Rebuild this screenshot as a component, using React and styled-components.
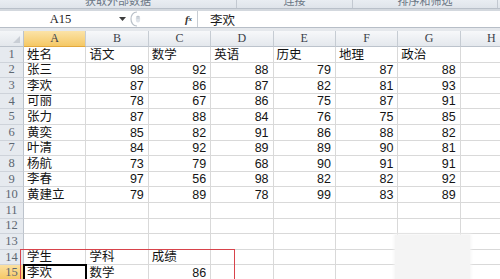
import React from 'react';
import styled, { createGlobalStyle } from 'styled-components';

const GlobalStyle = createGlobalStyle`
  html, body {
    margin: 0;
    padding: 0;
    background: #ffffff;
  }
  * {
    box-sizing: border-box;
  }
`;

const Window = styled.div`
  position: relative;
  width: 500px;
  height: 279px;
  overflow: hidden;
  background: #ffffff;
  font-family: 'Liberation Sans', 'Noto Sans CJK SC', sans-serif;
`;

const Ribbon = styled.div`
  display: flex;
  height: 9px;
  overflow: hidden;
  background: linear-gradient(#e9edf2, #dfe4ea);
  border-bottom: 1px solid #b9c0c9;
`;

const RibbonGroup = styled.div`
  width: ${(props) => props.$width}px;
  flex-shrink: 0;
  display: flex;
  justify-content: center;
  border-right: 1px solid #c3c9d1;
`;

const RibbonLabel = styled.span`
  font-family: 'Noto Sans CJK SC', sans-serif;
  font-size: 11px;
  line-height: 14px;
  margin-top: -7px;
  color: #6a7684;
`;

const RibbonEdge = styled.div`
  height: 2px;
  background: #d3d8de;
`;

const FormulaBar = styled.div`
  display: flex;
  align-items: center;
  height: 17px;
  background: #ffffff;
  border-bottom: 1px solid #b7bec7;
`;

const NameBox = styled.div`
  width: 128px;
  display: flex;
  align-items: center;
  padding-right: 2px;
`;

const NameText = styled.span`
  flex: 1;
  text-align: center;
  padding-left: 2px;
  font-family: 'Liberation Serif', serif;
  font-size: 12.5px;
  color: #222;
`;

const Splitter = styled.div`
  width: 52px;
  display: flex;
  align-items: center;
  padding-left: 2px;
`;

const FxBox = styled.div`
  width: 18px;
  height: 100%;
  display: flex;
  align-items: center;
  justify-content: center;
  border-right: 1px solid #c8cdd3;
  font-family: 'Liberation Serif', serif;
  font-style: italic;
  font-weight: bold;
  font-size: 11px;
  color: #333;
  sub {
    font-size: 7px;
    vertical-align: -1px;
  }
`;

const Formula = styled.div`
  padding-left: 12px;
  font-family: 'Noto Sans CJK SC', sans-serif;
  font-size: 12.5px;
  color: #1a1a1a;
`;

const Gap = styled.div`
  height: 3px;
  background: #e5e8ec;
`;

const Sheet = styled.div`
  display: grid;
  grid-template-columns: 24px repeat(8, 62.4px);
  grid-template-rows: 16px repeat(15, 15.6px);
`;

const Corner = styled.div`
  display: flex;
  align-items: flex-end;
  justify-content: flex-end;
  padding: 0 3px 3px 0;
  background: linear-gradient(#f4f6f8, #e3e7ec);
  border-right: 1px solid #bcc3cc;
  border-bottom: 1px solid #bcc3cc;
`;

const CornerMark = styled.div`
  width: 0;
  height: 0;
  border-left: 7px solid transparent;
  border-bottom: 7px solid #c9ced5;
`;

const ColHead = styled.div`
  display: flex;
  align-items: center;
  justify-content: center;
  font-family: 'Liberation Serif', serif;
  font-size: 12px;
  color: #3b4149;
  background: ${(props) =>
    props.$active
      ? 'linear-gradient(#fbe3a8, #f5c865)'
      : 'linear-gradient(#f7f8fa, #e4e8ed)'};
  border-right: 1px solid #c6ccd3;
  border-bottom: 1px solid ${(props) => (props.$active ? '#e2a83d' : '#bcc3cc')};
`;

const RowHead = styled.div`
  display: flex;
  align-items: center;
  justify-content: center;
  font-family: 'Liberation Serif', serif;
  font-size: 12.5px;
  color: #5d6772;
  background: ${(props) =>
    props.$active ? 'linear-gradient(#fbe0a0, #f5c661)' : '#e6eaef'};
  border-right: 1px solid #bcc3cc;
  border-bottom: 1px solid #ced3da;
`;

const Cell = styled.div`
  display: flex;
  align-items: flex-end;
  justify-content: ${(props) => (props.$num ? 'flex-end' : 'flex-start')};
  padding: 0 ${(props) => (props.$num ? '4px' : '2px')} 0 3px;
  line-height: 13px;
  font-size: 12.5px;
  color: #141414;
  white-space: nowrap;
  border-right: 1px solid #d9d9d9;
  border-bottom: 1px solid #d9d9d9;
  outline: ${(props) => (props.$selected ? '2px solid #000' : 'none')};
  outline-offset: -1px;
  position: ${(props) => (props.$selected ? 'relative' : 'static')};
  z-index: ${(props) => (props.$selected ? 2 : 'auto')};
`;

const Highlight = styled.div`
  position: absolute;
  left: 20px;
  top: 249px;
  width: 215px;
  height: 60px;
  border: 1px solid #d8434b;
  pointer-events: none;
`;

const Smudge = styled.div`
  position: absolute;
  left: 395px;
  top: 235px;
  width: 75px;
  height: 50px;
  background: #f4f4f4;
  box-shadow: 0 0 3px 1px #f4f4f4;
`;

const columns = ['A', 'B', 'C', 'D', 'E', 'F', 'G', 'H'];

const rows = [
  ['姓名', '语文', '数学', '英语', '历史', '地理', '政治'],
  ['张三', 98, 92, 88, 79, 87, 88],
  ['李欢', 87, 86, 87, 82, 81, 93],
  ['可丽', 78, 67, 86, 75, 87, 91],
  ['张力', 87, 88, 84, 76, 75, 85],
  ['黄奕', 85, 82, 91, 86, 88, 82],
  ['叶清', 84, 92, 89, 89, 90, 81],
  ['杨航', 73, 79, 68, 90, 91, 91],
  ['李春', 97, 56, 98, 82, 82, 92],
  ['黄建立', 79, 89, 78, 99, 83, 89],
  [],
  [],
  [],
  ['学生', '学科', '成绩'],
  ['李欢', '数学', 86],
];

const activeRow = 15;

export default function App() {
  return (
    <Window>
      <GlobalStyle />
      <Ribbon>
        <RibbonGroup $width={237}>
          <RibbonLabel>获取外部数据</RibbonLabel>
        </RibbonGroup>
        <RibbonGroup $width={116}>
          <RibbonLabel>连接</RibbonLabel>
        </RibbonGroup>
        <RibbonGroup $width={145}>
          <RibbonLabel>排序和筛选</RibbonLabel>
        </RibbonGroup>
      </Ribbon>
      <RibbonEdge />
      <FormulaBar>
        <NameBox>
          <NameText>A15</NameText>
          <svg width='7' height='4' viewBox='0 0 7 4'>
            <path d='M0 0 H7 L3.5 4 Z' fill='#3c3c3c' />
          </svg>
        </NameBox>
        <Splitter>
          <svg width='14' height='16' viewBox='0 0 14 16'>
            <path
              d='M7 1 C3 1 1 4.5 1 8 C1 11.5 3 15 7 15'
              fill='none'
              stroke='#b9c0c8'
              strokeWidth='1.2'
            />
            <ellipse cx='8' cy='8' rx='2.2' ry='3.5' fill='#dde2e8' />
            <path d='M6.5 5.5 H9.5 M6.5 7 H9.5' stroke='#a9b1ba' strokeWidth='0.6' />
          </svg>
        </Splitter>
        <FxBox>
          f<sub>x</sub>
        </FxBox>
        <Formula>李欢</Formula>
      </FormulaBar>
      <Gap />
      <Sheet>
        <Corner>
          <CornerMark />
        </Corner>
        {columns.map((col) => (
          <ColHead key={col} $active={col === 'A'}>
            {col}
          </ColHead>
        ))}
        {rows.map((row, r) => (
          <React.Fragment key={r}>
            <RowHead $active={r + 1 === activeRow}>{r + 1}</RowHead>
            {columns.map((col, c) => {
              const value = row[c];
              return (
                <Cell
                  key={col}
                  $num={typeof value === 'number'}
                  $selected={r + 1 === activeRow && c === 0}
                >
                  {value}
                </Cell>
              );
            })}
          </React.Fragment>
        ))}
      </Sheet>
      <Highlight />
      <Smudge />
    </Window>
  );
}
